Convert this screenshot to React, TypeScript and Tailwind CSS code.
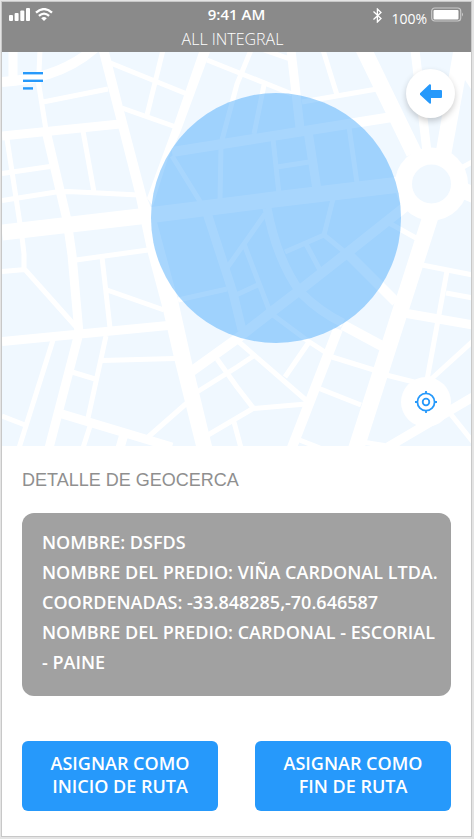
type RoadGroup = { width: number; d: string };

const roads: RoadGroup[] = [
  {
    width: 5,
    d: `M40 50L38.5 83L46 130 M43 102L108 89 M108 62L187 94 M163 50L147 115 M122 108L176 127
      M207 60L237 72L292 94 M251 50L237 84L222 140 M264 85L254 134 M264 50L290 59 M323 50L337 95
      M302 102L377 89 M463 167L474 161 M389 223L416 238 M332 357L374 370 M386 375L418 383
      M273 315L308 341L328 354 M318 388L361 405 M297 439L320 448 M309 342L285 377 M239 342L307 401
      M197 392L237 367L255 355 M217 359L237 387L254 409 M306 404L253 408.500L208 435 M234 422L241 448
      M422 265L473 275 M447 271L427 380 M446 293L473 298 M473 341L428 382 M362 442L400 448 M449 412L473 442
      M2 173.500L50 166.500 M2 200.500L56 192L68 191.500L139 195 M7 139L20 224 M22 237L24 254V269
      M83 131L94 192 M76 260L148 250 M2 271.500L25 269.500L78 329 M102 257L110 328 M107 290L164 310
      M53 340L19 448 M2 416L25 425 M106 336L88 418 M90 426L83 448 M102 360.500L175 358.500 M72 372L95 379
      M147 438L188 402 M221 147L220 200 M172 156L201 203 M273 139L279 194 M277 167L309 162 M349 127L357 183
      M265 214L227 268 M244 244L270 312 M260 284L234 296 M227 289L178 300 M333 199L324 235L285 252
      M324 235L346 253 M306 244L321 272`,
  },
  {
    width: 9,
    d: `M13 50V82 M2 136L120 124 M47 135L67 220L72 255L79 333L49 448 M2 341.500L168 325.500
      M62 414L172 447 M124 434L120 448 M291 50L300 128 M308 131L317 190 M415 50L427 152
      M404 313L473 325 M473 397L388 447 M207 213L233 293L242 330
      M267 208C273 240 284 270 301 293Q320 312 343 323`,
  },
  {
    width: 10,
    d: `M2 82C32 80 65 74 95 48 M172 152L392 117 M192 371L238 338L270 313L300 290L347 253L410 203
      M343 325L382 346 M350 256L396 302 M338 329L291 450`,
  },
  { width: 16, d: "M2 232.500L144 216L270 200L400 184.500 M363 48L414 153 M462 190L474 195 M432 212L356 449" },
];

const wedges = `M99 52L119 130L135 193L147 250L163 310L174 358L185 402L196 446H212L193 367L178 300
  L157 222L147 198L123 107L109 52Z M199 52L173 127L147 198L153 206L168 158L180 133L210 52Z
  M453 52H471V89L465 80L451 156H435Z`;

function GeofenceMap() {
  return (
    <svg
      className="block h-full w-full bg-[#f0f8ff]"
      viewBox="2 52 469 394"
      preserveAspectRatio="xMidYMid slice"
      aria-hidden="true"
    >
      {roads.map((road) => (
        <path key={road.width} d={road.d} fill="none" stroke="#fff" strokeWidth={road.width} />
      ))}
      <path d={wedges} fill="#fff" />
      <circle cx="431.500" cy="184" r="28" fill="#f0f8ff" stroke="#fff" strokeWidth="17" />
      <circle cx="276" cy="218" r="125" fill="#2699fb" fillOpacity="0.4" />
    </svg>
  );
}

function StatusBar() {
  return (
    <header className="h-[50px] bg-[#8a8a8a] text-white">
      <div className="grid h-[26px] grid-cols-[1fr_auto_1fr] px-[7px]">
        <div className="flex items-start gap-[5px] pt-[6px]">
          <svg className="h-[13px] w-[21px]" viewBox="0 0 21 13" fill="#fff" aria-hidden="true">
            <rect x="0" y="7" width="4" height="6" rx="1" />
            <rect x="5.600" y="5" width="4" height="8" rx="1" />
            <rect x="11.300" y="2.500" width="4" height="10.500" rx="1" />
            <rect x="17" y="0" width="4" height="13" rx="1" />
          </svg>
          <svg className="h-[13px] w-[18px]" viewBox="0 0 18 13" fill="none" stroke="#fff" aria-hidden="true">
            <path d="M1 4.700Q9-2.500 17 4.700" strokeWidth="2.300" />
            <path d="M3.900 7.900Q9 3.400 14.100 7.900" strokeWidth="2.200" />
            <path d="M6.200 10.200Q9 7.800 11.800 10.200L9 13Z" fill="#fff" stroke="none" />
          </svg>
        </div>
        <span className="pt-[2px] text-[15px] font-semibold leading-5">9:41 AM</span>
        <div className="flex items-start justify-end">
          <svg className="mr-2 mt-[6px] h-[15px] w-[11px]" viewBox="0 0 11 15" fill="none" stroke="#fff" strokeWidth="1.300" aria-hidden="true">
            <path d="M1.500 3.500L9 10.500L5.400 14V1L9 4.500L1.500 11.500" />
          </svg>
          <span className="mr-1 mt-[7px] text-[14px] leading-5">100%</span>
          <svg className="mt-[5px] h-[15px] w-[33px]" viewBox="0 0 33 15" aria-hidden="true">
            <rect x="0.700" y="1" width="29" height="13" rx="3" fill="none" stroke="#c9c9c9" strokeWidth="1.200" />
            <rect x="2.500" y="3" width="25" height="9.500" rx="1" fill="#fff" />
            <path d="M31 5.500Q33 7.500 31 9.500Z" fill="#c9c9c9" />
          </svg>
        </div>
      </div>
      <h1 className="pr-2 text-center text-[16px] font-light leading-[22px]">ALL INTEGRAL</h1>
    </header>
  );
}

const details = [
  "NOMBRE: DSFDS",
  "NOMBRE DEL PREDIO: VIÑA CARDONAL LTDA.",
  "COORDENADAS: -33.848285,-70.646587",
  "NOMBRE DEL PREDIO: CARDONAL - ESCORIAL - PAINE",
];

const actions = [
  ["ASIGNAR COMO", "INICIO DE RUTA"],
  ["ASIGNAR COMO", "FIN DE RUTA"],
];

export default function App() {
  return (
    <div className="min-h-screen bg-[#e4e4e4] pb-[2px] pl-px pr-[2px] pt-px font-['Open_Sans','Noto_Sans',sans-serif]">
      <main className="border border-[#c8c8c8] bg-white pb-[25px]">
        <StatusBar />
        <section className="relative h-[394px]" aria-label="Mapa de geocerca">
          <GeofenceMap />
          <button type="button" aria-label="Menú" className="absolute left-5 top-[18px] flex h-6 w-[22px] items-center justify-center">
            <svg className="h-5 w-5" viewBox="0 0 20 20" fill="#2699fb" aria-hidden="true">
              <rect y="0" width="20" height="2.400" />
              <rect y="7.600" width="20" height="2.400" />
              <rect y="15.200" width="10" height="2.400" />
            </svg>
          </button>
          <button
            type="button"
            aria-label="Volver"
            className="absolute right-4 top-[17px] flex h-[49px] w-[49px] items-center justify-center rounded-full bg-white shadow-[0_3px_6px_rgba(0,0,0,0.2)]"
          >
            <svg className="h-5 w-[22px]" viewBox="0 0 22 20" fill="#2699fb" aria-hidden="true">
              <path d="M0 9.200L9.500 0.200Q11 0 11 1.200V6H21Q22 6 22 7V13Q22 14 21 14H11V18.800Q11 20 9.500 19.500L0 10.800Q-.7 10 0 9.200Z" />
            </svg>
          </button>
          <button
            type="button"
            aria-label="Mi ubicación"
            className="absolute bottom-[19px] right-5 flex h-[50px] w-[50px] items-center justify-center rounded-full bg-white"
          >
            <svg className="h-[22px] w-[22px]" viewBox="0 0 22 22" fill="none" stroke="#2699fb" strokeWidth="1.800" aria-hidden="true">
              <circle cx="11" cy="11" r="8.600" />
              <circle cx="11" cy="11" r="3.300" />
              <path d="M11 0V3M11 19V22M0 11H3M19 11H22" />
            </svg>
          </button>
        </section>
        <section className="px-5 pt-[22px]">
          <h2 className="font-['Liberation_Sans',Arial,sans-serif] text-[18px] leading-6 text-[#8f8f8f]">DETALLE DE GEOCERCA</h2>
          <div className="mt-[21px] rounded-[12px] bg-[#a1a1a1] pb-[19px] pl-5 pr-3 pt-[14px] text-[18px] font-semibold leading-[30px] text-white">
            {details.map((line) => (
              <p key={line}>{line}</p>
            ))}
          </div>
          <div className="mt-[45px] flex justify-between gap-4">
            {actions.map(([first, second]) => (
              <button
                key={second}
                type="button"
                className="h-[70px] w-[196px] rounded-md bg-[#2699fb] pb-[2px] text-[18px] font-semibold leading-[23px] text-white"
              >
                {first}
                <br />
                {second}
              </button>
            ))}
          </div>
        </section>
      </main>
    </div>
  );
}
